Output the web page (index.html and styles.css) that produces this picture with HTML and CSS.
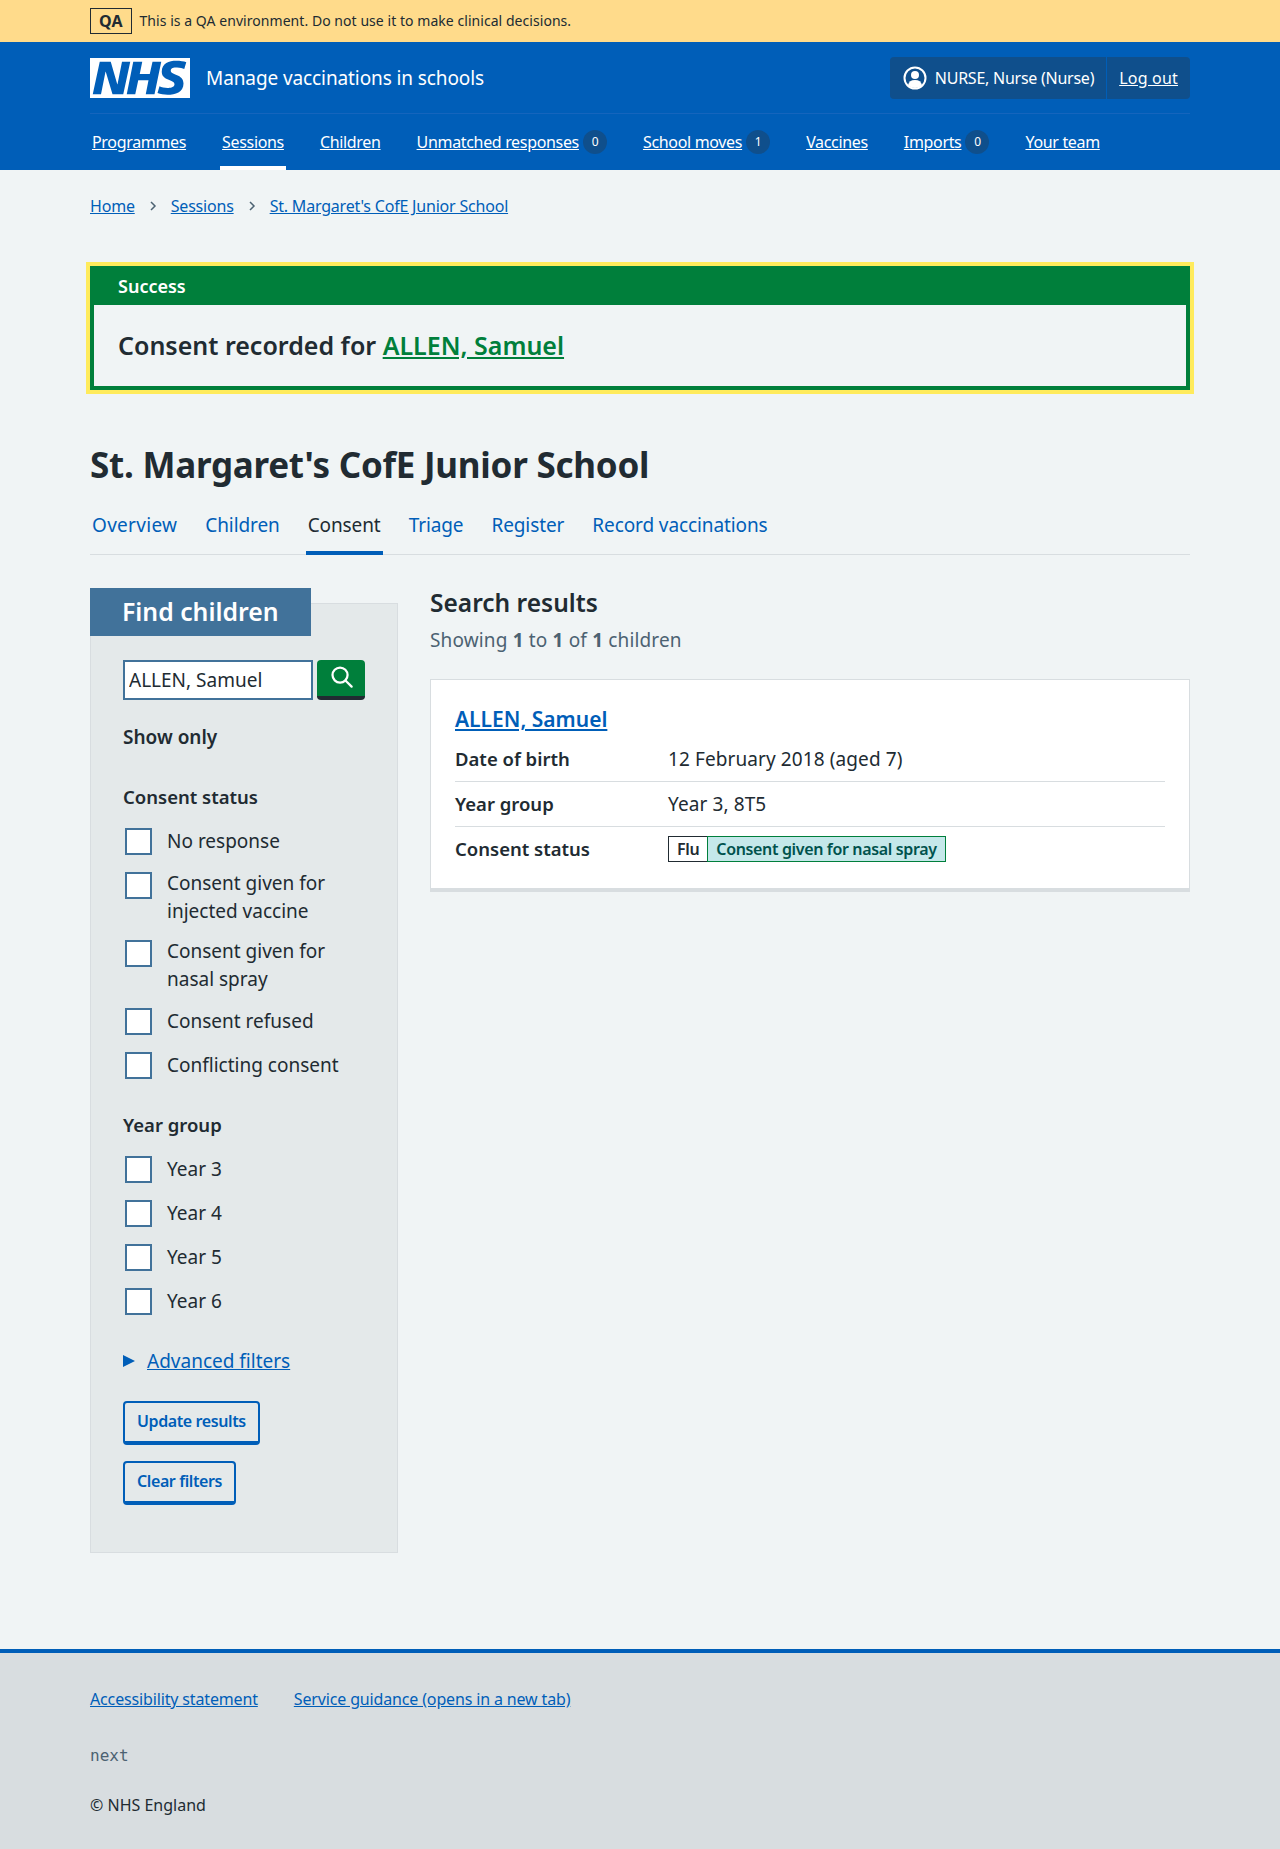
FILE: index.html
```html
<!DOCTYPE html>
<html lang="en">
<head>
  <meta charset="UTF-8">
  <meta name="viewport" content="width=device-width, initial-scale=1.0">
  <title>Consent | St. Margaret's CofE Junior School</title>
  <link rel="stylesheet" href="styles.css">
</head>
<body>

  <!-- Environment banner -->
  <div class="env-bar">
    <div class="wrap env-inner">
      <strong class="env-tag">QA</strong>
      <span>This is a QA environment. Do not use it to make clinical decisions.</span>
    </div>
  </div>

  <header class="header">
    <div class="wrap">
      <div class="header-top">
        <a href="#" class="brand">
          <svg class="logo" viewBox="0 0 40 16" aria-label="NHS">
            <path fill="#fff" d="M0 0h40v16H0z"/>
            <path fill="#005eb8" d="M3.9 1.5h4.4l2.6 9h.1l1.8-9h3.3l-2.8 13H9l-2.7-9h-.1l-1.8 9H1.1M17.3 1.5h3.6l-1 4.9h4L25 1.5h3.5l-2.7 13h-3.5l1.1-5.6h-4.1l-1.2 5.6h-3.4M37.7 4.4c-.7-.3-1.6-.6-2.9-.6-1.4 0-2.5.2-2.5 1.3 0 1.8 5.1 1.2 5.1 5.1 0 3.6-3.3 4.5-6.4 4.5-1.3 0-2.9-.3-4-.7l.8-2.7c.7.4 2.1.7 3.2.7s2.8-.2 2.8-1.5c0-2.1-5.1-1.3-5.1-5 0-3.4 2.9-4.4 5.8-4.4 1.6 0 3.1.2 4 .6"/>
          </svg>
          <span class="service-name">Manage vaccinations in schools</span>
        </a>
        <div class="account">
          <div class="account-user">
            <svg class="account-icon" viewBox="0 0 24 24">
              <circle cx="12" cy="12" r="10.5" fill="none" stroke="#fff" stroke-width="2"/>
              <circle cx="12" cy="9" r="4" fill="#fff"/>
              <path fill="#fff" d="M5 19.2c.6-3.4 3-5.2 7-5.2s6.400 1.800 7 5.200a10 10 0 0 1-14 0z"/>
            </svg>
            <span>NURSE, Nurse (Nurse)</span>
          </div>
          <a href="#" class="account-logout">Log out</a>
        </div>
      </div>
      <nav class="nav">
        <a href="#" class="nav-item"><span class="nav-link">Programmes</span></a>
        <a href="#" class="nav-item nav-item-active"><span class="nav-link">Sessions</span></a>
        <a href="#" class="nav-item"><span class="nav-link">Children</span></a>
        <a href="#" class="nav-item"><span class="nav-link">Unmatched responses</span><span class="count">0</span></a>
        <a href="#" class="nav-item"><span class="nav-link">School moves</span><span class="count">1</span></a>
        <a href="#" class="nav-item"><span class="nav-link">Vaccines</span></a>
        <a href="#" class="nav-item"><span class="nav-link">Imports</span><span class="count">0</span></a>
        <a href="#" class="nav-item"><span class="nav-link">Your team</span></a>
      </nav>
    </div>
  </header>

  <div class="wrap">
    <nav class="breadcrumb">
      <a href="#">Home</a>
      <svg class="crumb-sep" viewBox="0 0 8 12"><path d="M2 2l4 4-4 4" fill="none" stroke="#4c6272" stroke-width="1.500"/></svg>
      <a href="#">Sessions</a>
      <svg class="crumb-sep" viewBox="0 0 8 12"><path d="M2 2l4 4-4 4" fill="none" stroke="#4c6272" stroke-width="1.500"/></svg>
      <a href="#">St. Margaret's CofE Junior School</a>
    </nav>

    <main>
      <div class="banner">
        <div class="banner-title">Success</div>
        <div class="banner-body">Consent recorded for <a href="#">ALLEN, Samuel</a></div>
      </div>

      <h1>St. Margaret's CofE Junior School</h1>

      <div class="tabs">
        <a href="#" class="tab">Overview</a>
        <a href="#" class="tab">Children</a>
        <a href="#" class="tab tab-active">Consent</a>
        <a href="#" class="tab">Triage</a>
        <a href="#" class="tab">Register</a>
        <a href="#" class="tab">Record vaccinations</a>
      </div>

      <div class="columns">
        <aside class="filters">
          <h2 class="filters-title">Find children</h2>
          <div class="filters-body">
            <div class="search">
              <input class="search-input" type="text" value="ALLEN, Samuel">
              <button class="search-button" aria-label="Search">
                <svg viewBox="0 0 24 24" width="27" height="27">
                  <circle cx="10.700" cy="10.700" r="6.700" fill="none" stroke="#fff" stroke-width="2"/>
                  <path d="M15.500 15.500l5.500 5.500" stroke="#fff" stroke-width="2" stroke-linecap="round"/>
                </svg>
              </button>
            </div>

            <p class="show-only">Show only</p>

            <fieldset class="group">
              <legend>Consent status</legend>
              <label class="check"><span class="box"></span><span>No response</span></label>
              <label class="check"><span class="box"></span><span>Consent given for injected vaccine</span></label>
              <label class="check"><span class="box"></span><span>Consent given for nasal spray</span></label>
              <label class="check"><span class="box"></span><span>Consent refused</span></label>
              <label class="check"><span class="box"></span><span>Conflicting consent</span></label>
            </fieldset>

            <fieldset class="group">
              <legend>Year group</legend>
              <label class="check"><span class="box"></span><span>Year 3</span></label>
              <label class="check"><span class="box"></span><span>Year 4</span></label>
              <label class="check"><span class="box"></span><span>Year 5</span></label>
              <label class="check"><span class="box"></span><span>Year 6</span></label>
            </fieldset>

            <div class="advanced"><span class="arrow"></span><a href="#">Advanced filters</a></div>

            <div class="filter-actions">
              <button class="btn">Update results</button>
              <button class="btn">Clear filters</button>
            </div>
          </div>
        </aside>

        <section class="results">
          <h2 class="results-title">Search results</h2>
          <p class="results-count">Showing <b>1</b> to <b>1</b> of <b>1</b> children</p>

          <div class="card">
            <h3 class="card-title"><a href="#">ALLEN, Samuel</a></h3>
            <dl class="summary">
              <div class="summary-row"><dt>Date of birth</dt><dd>12 February 2018 (aged 7)</dd></div>
              <div class="summary-row"><dt>Year group</dt><dd>Year 3, 8T5</dd></div>
              <div class="summary-row"><dt>Consent status</dt><dd><span class="tag tag-white">Flu</span><span class="tag tag-aqua">Consent given for nasal spray</span></dd></div>
            </dl>
          </div>
        </section>
      </div>
    </main>
  </div>

  <footer class="footer">
    <div class="wrap">
      <div class="footer-links">
        <a href="#">Accessibility statement</a>
        <a href="#">Service guidance (opens in a new tab)</a>
      </div>
      <p class="version">next</p>
      <p class="copyright">© NHS England</p>
    </div>
  </footer>

</body>
</html>
```

FILE: styles.css
```css
* {
  box-sizing: border-box;
}

body {
  margin: 0;
  background-color: #f0f4f5;
  color: #212b32;
  font-family: "Noto Sans", "Open Sans", sans-serif;
  font-size: 19px;
  line-height: 28px;
}

a {
  color: #005eb8;
}

.wrap {
  width: 1100px;
  margin: 0 auto;
}

/* Environment banner */
.env-bar {
  height: 42px;
  background-color: #ffdb8b;
  font-size: 14px;
  letter-spacing: 0.05px;
}

.env-inner {
  display: flex;
  align-items: center;
  gap: 8px;
  height: 42px;
}

.env-tag {
  padding: 0 8px;
  border: 1px solid #212b32;
  font-size: 16px;
  line-height: 24px;
}

/* Header */
.header {
  height: 128px;
  background-color: #005eb8;
  color: #fff;
}

.header a {
  color: #fff;
}

.header-top {
  display: flex;
  justify-content: space-between;
  align-items: center;
  height: 72px;
  border-bottom: 1px solid #1565bd;
}

.brand {
  display: flex;
  align-items: center;
  gap: 16px;
  text-decoration: none;
}

.logo {
  display: block;
  width: 100px;
  height: 40px;
}

.service-name {
  font-size: 19px;
  letter-spacing: -0.1px;
}

.account {
  display: flex;
  height: 42px;
  margin-top: 1px;
  border-radius: 4px;
  background-color: #0f4f8c;
  font-size: 16px;
}

.account-user {
  display: flex;
  align-items: center;
  gap: 8px;
  padding: 0 12px 0 13px;
  border-right: 1px solid #005eb8;
  letter-spacing: -0.25px;
}

.account-icon {
  width: 24px;
  height: 24px;
}

.account-logout {
  display: flex;
  align-items: center;
  padding: 0 12px;
  letter-spacing: 0.2px;
}

.nav {
  display: flex;
  height: 56px;
}

.nav-item {
  display: flex;
  align-items: center;
  gap: 4px;
  margin-right: 32px;
  padding: 4px 2px 0;
  font-size: 16px;
  letter-spacing: -0.33px;
  text-decoration: none;
  border-bottom: 4px solid transparent;
}

.nav-item-active {
  border-bottom-color: #fff;
}

.nav-link {
  text-decoration: underline;
}

.count {
  width: 24px;
  height: 24px;
  border-radius: 50%;
  background-color: #0f4f8c;
  font-size: 12px;
  line-height: 24px;
  text-align: center;
}

/* Breadcrumb */
.breadcrumb {
  display: flex;
  align-items: center;
  height: 72px;
  font-size: 16px;
  letter-spacing: -0.2px;
}

.crumb-sep {
  width: 36px;
  height: 12px;
}

/* Success banner */
.banner {
  margin-top: 24px;
  border: 4px solid #007f3b;
  outline: 4px solid #ffeb5c;
}

.banner-title {
  height: 35px;
  padding: 0 24px;
  background-color: #007f3b;
  color: #fff;
  font-size: 18px;
  font-weight: 600;
  line-height: 32px;
}

.banner-body {
  height: 81px;
  padding: 0 24px;
  font-size: 25px;
  font-weight: 600;
  line-height: 80px;
}

.banner-body a {
  color: #007f3b;
}

h1 {
  margin: 51px 0 0;
  font-size: 35px;
  letter-spacing: -0.25px;
  line-height: 48px;
}

/* Tabs */
.tabs {
  display: flex;
  gap: 24px;
  height: 56px;
  margin-top: 10px;
  border-bottom: 1px solid #d8dde0;
}

.tab {
  height: 56px;
  padding: 0 2px;
  font-size: 19px;
  letter-spacing: -0.1px;
  line-height: 52px;
  text-decoration: none;
}

.tab:first-child {
  letter-spacing: 0.3px;
}

.tab-active {
  border-bottom: 4px solid #005eb8;
  color: #212b32;
}

/* Two columns */
.columns {
  display: flex;
  gap: 32px;
  margin-top: 33px;
}

/* Filters panel */
.filters {
  flex: none;
  width: 308px;
}

.filters-title {
  position: relative;
  width: 221px;
  height: 48px;
  margin: 0;
  padding: 0 32px;
  background-color: #41729a;
  color: #fff;
  font-size: 24.800px;
  font-weight: 600;
  line-height: 46px;
  white-space: nowrap;
}

.filters-body {
  height: 950px;
  margin-top: -33px;
  padding: 56px 32px 0;
  border: 1px solid #d8dde0;
  background-color: #e4e9ea;
}

.search {
  display: flex;
  gap: 4px;
}

.search-input {
  width: 190px;
  height: 40px;
  padding: 0 4px;
  border: 2px solid #41729a;
  border-radius: 0;
  background-color: #fff;
  color: #212b32;
  font-family: inherit;
  font-size: 19px;
}

.search-button {
  width: 48px;
  height: 40px;
  padding: 0 0 4px;
  border: 0;
  border-bottom: 4px solid #212b32;
  border-radius: 4px;
  background-color: #007f3b;
}

.search-button svg {
  display: block;
  margin: 0 auto;
}

.show-only {
  margin: 23px 0 0;
  font-weight: 600;
}

.group {
  margin: 32px 0 0;
  padding: 0;
  border: 0;
}

.group + .group {
  margin-top: 30px;
}

.group legend {
  padding: 0;
  font-size: 18.500px;
  font-weight: 600;
}

.group legend + .check {
  margin-top: 14px;
}

.check {
  display: flex;
  gap: 15px;
  align-items: center;
  min-height: 32px;
  margin-top: 12px;
  padding-left: 2px;
}

.box {
  flex: none;
  align-self: flex-start;
  width: 27px;
  height: 27px;
  margin-top: 3px;
  border: 2px solid #41729a;
  background-color: #fff;
}

.advanced {
  display: flex;
  align-items: center;
  gap: 12px;
  margin-top: 30px;
}

.arrow {
  width: 0;
  height: 0;
  border-top: 6px solid transparent;
  border-bottom: 6px solid transparent;
  border-left: 12px solid #005eb8;
}

.filter-actions {
  margin-top: 26px;
}

.btn {
  display: block;
  height: 44px;
  margin-bottom: 16px;
  padding: 0 12px 2px;
  border: 2px solid #005eb8;
  border-bottom-width: 4px;
  border-radius: 4px;
  background: transparent;
  color: #005eb8;
  font-family: inherit;
  font-size: 16px;
  font-weight: 600;
  letter-spacing: -0.4px;
}

/* Results */
.results {
  flex: 1;
}

.results-title {
  margin: -1px 0 0;
  font-size: 24.500px;
  font-weight: 600;
  line-height: 32px;
}

.results-count {
  margin: 7px 0 0;
  color: #4c6272;
  letter-spacing: 0.15px;
}

.card {
  height: 213px;
  margin-top: 25px;
  padding: 23px 24px 0;
  border: 1px solid #d8dde0;
  border-bottom-width: 4px;
  background-color: #fff;
}

.card-title {
  margin: 0;
  font-size: 21px;
  font-weight: 600;
  line-height: 32px;
}

.summary {
  margin: 2px 0 0;
}

.summary-row {
  display: flex;
  height: 45px;
  padding-top: 8px;
  border-bottom: 1px solid #d8dde0;
}

.summary-row:last-child {
  border-bottom: 0;
}

.summary-row dt {
  width: 213px;
  font-weight: 600;
  font-size: 18.500px;
}

.summary-row dd {
  display: flex;
  margin: 0;
  letter-spacing: 0.1px;
}

.tag {
  height: 26px;
  margin-top: 1px;
  padding: 0 8px;
  border: 1px solid;
  font-size: 16px;
  font-weight: 600;
  letter-spacing: -0.35px;
  line-height: 24px;
}

.tag-white {
  border-color: #212b32;
  background-color: #fff;
}

.tag-aqua {
  margin-left: -1px;
  border-color: #007f3b;
  background-color: #c5e8ea;
  color: #00524d;
}

/* Footer */
.footer {
  height: 200px;
  margin-top: 96px;
  padding-top: 32px;
  border-top: 4px solid #005eb8;
  background-color: #d8dde0;
  font-size: 16px;
}

.footer-links {
  display: flex;
  gap: 36px;
  letter-spacing: -0.15px;
}

.version {
  margin: 29px 0 0;
  color: #4c6272;
  font-family: "DejaVu Sans Mono", monospace;
  font-size: 16px;
}

.copyright {
  margin: 21px 0 0;
}
```
